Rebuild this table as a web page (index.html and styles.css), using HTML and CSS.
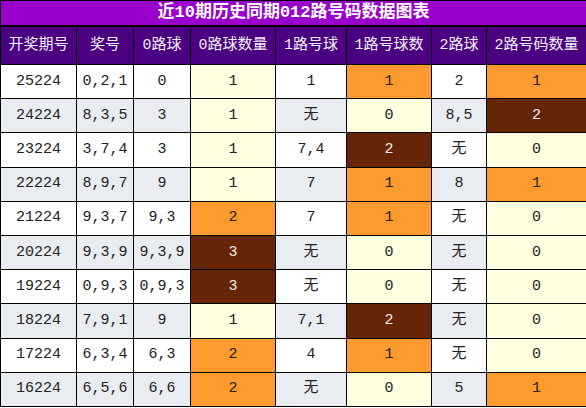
FILE: index.html
```html
<!DOCTYPE html>
<html lang="zh">
<head>
<meta charset="utf-8">
<link rel="stylesheet" href="styles.css">
</head>
<body>
<table class="chart">
  <colgroup>
    <col class="c1"><col class="c2"><col class="c3"><col class="c4"><col class="c5"><col class="c6"><col class="c7"><col class="c8">
  </colgroup>
  <thead>
    <tr class="title-row"><th colspan="8">近10期历史同期012路号码数据图表</th></tr>
    <tr class="head-row">
      <th>开奖期号</th><th>奖号</th><th>0路球</th><th>0路球数量</th><th>1路号球</th><th>1路号球数</th><th>2路球</th><th>2路号码数量</th>
    </tr>
  </thead>
  <tbody>
    <tr><td>25224</td><td>0,2,1</td><td>0</td><td class="lv0">1</td><td>1</td><td class="lv1">1</td><td>2</td><td class="lv1">1</td></tr>
    <tr class="alt"><td>24224</td><td>8,3,5</td><td>3</td><td class="lv0">1</td><td>无</td><td class="lv0">0</td><td>8,5</td><td class="lv2">2</td></tr>
    <tr><td>23224</td><td>3,7,4</td><td>3</td><td class="lv0">1</td><td>7,4</td><td class="lv2">2</td><td>无</td><td class="lv0">0</td></tr>
    <tr class="alt"><td>22224</td><td>8,9,7</td><td>9</td><td class="lv0">1</td><td>7</td><td class="lv1">1</td><td>8</td><td class="lv1">1</td></tr>
    <tr><td>21224</td><td>9,3,7</td><td>9,3</td><td class="lv1">2</td><td>7</td><td class="lv1">1</td><td>无</td><td class="lv0">0</td></tr>
    <tr class="alt"><td>20224</td><td>9,3,9</td><td>9,3,9</td><td class="lv2">3</td><td>无</td><td class="lv0">0</td><td>无</td><td class="lv0">0</td></tr>
    <tr><td>19224</td><td>0,9,3</td><td>0,9,3</td><td class="lv2">3</td><td>无</td><td class="lv0">0</td><td>无</td><td class="lv0">0</td></tr>
    <tr class="alt"><td>18224</td><td>7,9,1</td><td>9</td><td class="lv0">1</td><td>7,1</td><td class="lv2">2</td><td>无</td><td class="lv0">0</td></tr>
    <tr><td>17224</td><td>6,3,4</td><td>6,3</td><td class="lv1">2</td><td>4</td><td class="lv1">1</td><td>无</td><td class="lv0">0</td></tr>
    <tr class="alt"><td>16224</td><td>6,5,6</td><td>6,6</td><td class="lv1">2</td><td>无</td><td class="lv0">0</td><td>5</td><td class="lv1">1</td></tr>
  </tbody>
</table>
</body>
</html>
```

FILE: styles.css
```css
html, body {
  margin: 0;
  padding: 0;
  background: #ffffff;
}
.chart {
  width: 586px;
  border-collapse: collapse;
  table-layout: fixed;
  font-family: "Liberation Mono", "Noto Sans CJK SC", monospace;
  font-size: 15px;
  color: #222222;
}
.c1 { width: 76px; }
.c2 { width: 57px; }
.c3 { width: 57px; }
.c4 { width: 85px; }
.c5 { width: 71px; }
.c6 { width: 85px; }
.c7 { width: 55px; }
.c8 { width: 100px; }
.chart th, .chart td {
  border: 1px solid #000000;
  padding: 0;
  text-align: center;
  white-space: nowrap;
  overflow: hidden;
}
.title-row th {
  background: #9900cc;
  color: #ffffff;
  font-size: 17px;
  font-weight: bold;
  height: 24px;
  line-height: 24px;
  border-bottom: 2px solid #000000;
}
.head-row th {
  background: #4b0082;
  color: #f0f0f0;
  font-weight: normal;
  height: 37px;
  line-height: 20px;
}
.chart td {
  height: 33.2px;
  line-height: 20px;
  background: #ffffff;
}
.chart tr.alt td {
  background: #e9edf1;
}
.chart tr td.lv0 { background: #ffffe0; }
.chart tr td.lv1 { background: #ff9a2e; }
.chart tr td.lv2 { background: #662506; color: #eeeeee; }
```
